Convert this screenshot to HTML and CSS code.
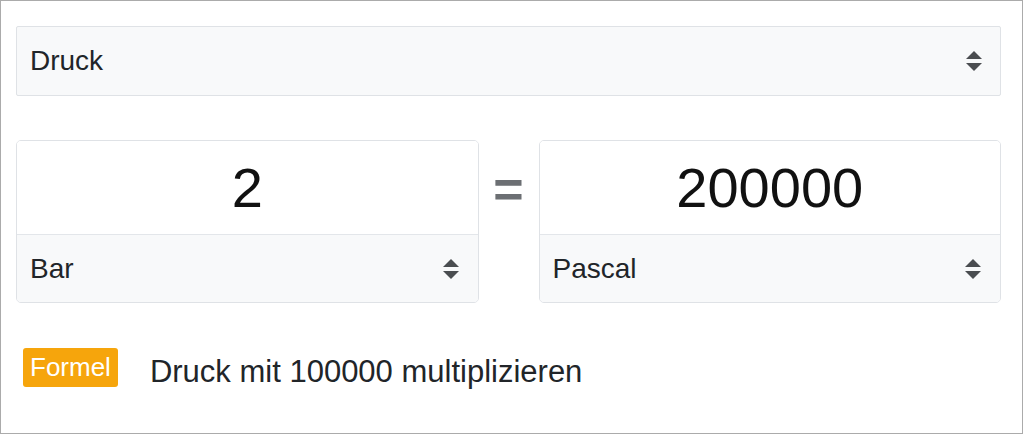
FILE: index.html
```html
<!DOCTYPE html>
<html lang="de">
<head>
    <meta charset="utf-8" />
    <title>Druck umrechnen</title>
    <link rel="stylesheet" href="styles.css">
</head>
<body>
<div class="frame">
    <div class="select main-select">
        <span>Druck</span>
        <svg class="arrows" viewBox="0 0 4 5"><path d="M2 0L0 2h4zm0 5L0 3h4z"/></svg>
    </div>

    <div class="converter">
        <div class="unit-card">
            <div class="value">2</div>
            <div class="select unit-select">
                <span>Bar</span>
                <svg class="arrows" viewBox="0 0 4 5"><path d="M2 0L0 2h4zm0 5L0 3h4z"/></svg>
            </div>
        </div>
        <div class="equals">=</div>
        <div class="unit-card">
            <div class="value">200000</div>
            <div class="select unit-select">
                <span>Pascal</span>
                <svg class="arrows" viewBox="0 0 4 5"><path d="M2 0L0 2h4zm0 5L0 3h4z"/></svg>
            </div>
        </div>
    </div>

    <div class="formula">
        <span class="badge">Formel</span>
        <span class="formula-text">Druck mit 100000 multiplizieren</span>
    </div>
</div>
</body>
</html>
```

FILE: styles.css
```css
* {
    margin: 0;
    padding: 0;
    box-sizing: border-box;
}

body {
    background: #fff;
    font-family: "Liberation Sans", Arial, sans-serif;
    color: #212529;
}

.frame {
    width: 1023px;
    height: 434px;
    border: 1px solid #ababab;
    padding: 25px 21px 0 15px;
}

.select {
    display: flex;
    align-items: center;
    justify-content: space-between;
    background: #f8f9fa;
    font-size: 28px;
    color: #212529;
    padding: 0 18px 0 13px;
}

.main-select {
    height: 70px;
    border: 1px solid #dfe2e6;
    border-radius: 2px;
}

.arrows {
    width: 16px;
    height: 20px;
    fill: #4a4d50;
}

.converter {
    display: grid;
    grid-template-columns: 1fr 60px 1fr;
    margin-top: 44px;
}

.unit-card {
    border: 1px solid #dfe2e6;
    border-radius: 5px;
    overflow: hidden;
}

.value {
    height: 93px;
    display: flex;
    align-items: center;
    justify-content: center;
    font-size: 56px;
    color: #111;
    background: #fff;
}

.unit-select {
    height: 68px;
    border-top: 1px solid #e3e6ea;
    padding-right: 19px;
}

.equals {
    display: flex;
    justify-content: center;
    align-items: center;
    height: 94px;
    padding-top: 4px;
    font-size: 52px;
    font-weight: bold;
    color: #6c6f73;
}

.formula {
    display: flex;
    align-items: flex-start;
    margin-top: 45px;
    padding-left: 7px;
}

.badge {
    background: #f6a50c;
    color: #fff;
    font-size: 26px;
    line-height: 39px;
    padding: 0 7px;
    border-radius: 3px;
}

.formula-text {
    margin-left: 32px;
    margin-top: 6px;
    font-size: 31px;
    color: #212529;
}
```
